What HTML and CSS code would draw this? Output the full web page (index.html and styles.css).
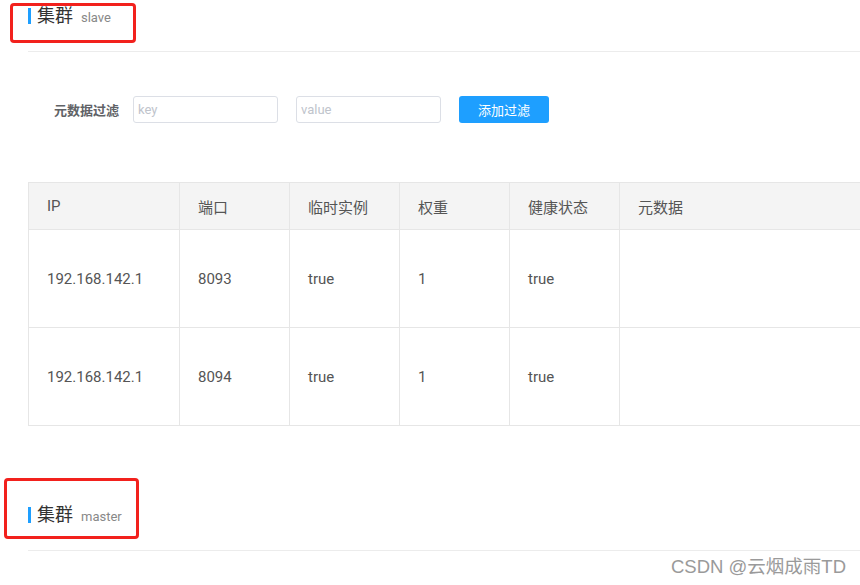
FILE: index.html
```html
<!DOCTYPE html>
<html lang="zh">
<head>
<meta charset="utf-8">
<title>集群</title>
<link rel="stylesheet" href="styles.css">
</head>
<body>
<div class="page">
  <section class="cluster">
    <div class="cluster-head">
      <div class="title"><span class="bar"></span><span class="name">集群</span><span class="sub">slave</span></div>
      <div class="mark mark-1"></div>
    </div>
    <div class="filter">
      <label class="filter-label">元数据过滤</label>
      <input class="field" type="text" placeholder="key">
      <input class="field" type="text" placeholder="value">
      <button class="btn" type="button">添加过滤</button>
    </div>
    <table class="grid">
      <colgroup>
        <col class="c-ip"><col class="c-s"><col class="c-s"><col class="c-s"><col class="c-s"><col>
      </colgroup>
      <thead>
        <tr><th>IP</th><th>端口</th><th>临时实例</th><th>权重</th><th>健康状态</th><th>元数据</th></tr>
      </thead>
      <tbody>
        <tr><td>192.168.142.1</td><td>8093</td><td>true</td><td>1</td><td>true</td><td></td></tr>
        <tr><td>192.168.142.1</td><td>8094</td><td>true</td><td>1</td><td>true</td><td></td></tr>
      </tbody>
    </table>
  </section>
  <section class="cluster second">
    <div class="cluster-head">
      <div class="title"><span class="bar"></span><span class="name">集群</span><span class="sub">master</span></div>
      <div class="mark mark-2"></div>
    </div>
  </section>
  <div class="watermark">CSDN @云烟成雨TD</div>
</div>
</body>
</html>
```

FILE: styles.css
```css
html, body {
  margin: 0;
  padding: 0;
  background: #fff;
  overflow: hidden;
}
body {
  font-family: Roboto, "Noto Sans CJK SC", sans-serif;
  color: #555;
}
.page {
  position: relative;
  width: 860px;
  height: 585px;
  overflow: hidden;
}
.cluster-head {
  position: relative;
  margin-left: 28px;
  height: 51px;
  border-bottom: 1px solid #ececec;
  box-sizing: content-box;
}
.title {
  display: flex;
  align-items: center;
  height: 20px;
  padding-top: 6px;
}
.bar {
  display: inline-block;
  width: 3px;
  height: 16px;
  background: #1e9fff;
  margin-right: 6px;
}
.name {
  font-size: 18px;
  color: #333;
  line-height: 20px;
}
.sub {
  font-size: 13px;
  color: #888;
  margin-left: 8px;
  margin-top: 2px;
}
.mark {
  position: absolute;
  border: 3px solid #f2211d;
  border-radius: 4px;
  box-sizing: border-box;
}
.mark-1 {
  left: -18px;
  top: 3px;
  width: 126px;
  height: 40px;
}
.mark-2 {
  left: -24px;
  top: -21px;
  width: 135px;
  height: 61px;
}
.filter {
  display: flex;
  align-items: center;
  margin-top: 44px;
  padding-left: 54px;
  height: 27px;
}
.filter-label {
  width: 66px;
  font-size: 13px;
  font-weight: 600;
  color: #606266;
  margin-right: 13px;
  white-space: nowrap;
}
.field {
  width: 145px;
  height: 27px;
  box-sizing: border-box;
  border: 1px solid #dcdfe6;
  border-radius: 3px;
  padding: 0 4px;
  font-family: Roboto, "Noto Sans CJK SC", sans-serif;
  font-size: 13px;
  color: #555;
  margin-right: 18px;
  outline: none;
}
.field::placeholder {
  color: #c0c4cc;
}
.btn {
  width: 90px;
  height: 27px;
  border: none;
  border-radius: 3px;
  background: #1e9fff;
  color: #fff;
  font-family: Roboto, "Noto Sans CJK SC", sans-serif;
  font-size: 13px;
  padding: 0;
}
.grid {
  margin-top: 59px;
  margin-left: 28px;
  width: 880px;
  border-collapse: collapse;
  table-layout: fixed;
  font-size: 15px;
}
.c-ip { width: 151px; }
.c-s { width: 110px; }
.grid th, .grid td {
  border: 1px solid #e6e6e6;
  text-align: left;
  padding: 0 18px;
  font-weight: normal;
  color: #555;
}
.grid th {
  height: 46px;
  background: #f4f4f4;
}
.grid td {
  height: 97px;
}
.second {
  margin-top: 73px;
}
.watermark {
  position: absolute;
  left: 671px;
  top: 552px;
  font-family: "Liberation Sans", "Noto Sans CJK SC", sans-serif;
  font-size: 18.5px;
  color: #9a9a9a;
  white-space: nowrap;
}
```
